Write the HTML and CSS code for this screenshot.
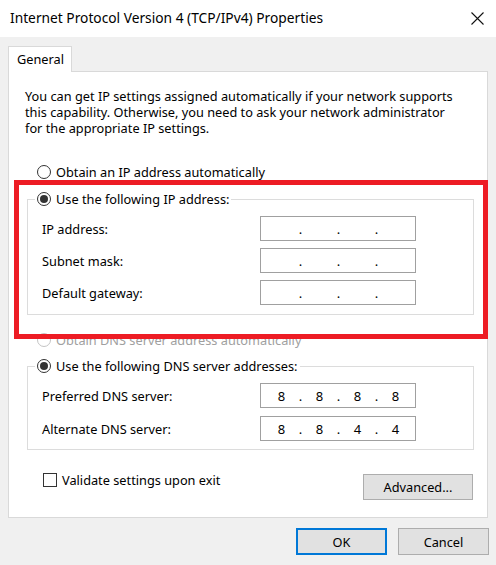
FILE: index.html
```html
<!DOCTYPE html>
<html lang="en">
<head>
<meta charset="utf-8">
<title>Internet Protocol Version 4 (TCP/IPv4) Properties</title>
<link rel="stylesheet" href="styles.css">
</head>
<body>
<div class="window">
  <div class="titlebar">
    <span class="title">Internet Protocol Version 4 (TCP/IPv4) Properties</span>
    <svg class="close" width="13" height="13" viewBox="0 0 13 13"><path d="M0.5 0.5L12.5 12.5M12.5 0.5L0.5 12.5" stroke="#111" stroke-width="1.1" fill="none"/></svg>
  </div>
  <div class="content">
    <div class="tab">General</div>
    <div class="panel">
      <p class="intro">You can get IP settings assigned automatically if your network supports<br>this capability. Otherwise, you need to ask your network administrator<br>for the appropriate IP settings.</p>

      <div class="radio-row"><span class="radio"></span><span>Obtain an IP address automatically</span></div>

      <fieldset class="group group-ip">
        <legend><span class="radio checked"></span><span>Use the following IP address:</span></legend>
        <div class="fields">
          <span class="label">IP address:</span>
          <div class="ipbox"><span class="seg"></span><span class="dot">.</span><span class="seg"></span><span class="dot">.</span><span class="seg"></span><span class="dot">.</span><span class="seg"></span></div>
          <span class="label">Subnet mask:</span>
          <div class="ipbox"><span class="seg"></span><span class="dot">.</span><span class="seg"></span><span class="dot">.</span><span class="seg"></span><span class="dot">.</span><span class="seg"></span></div>
          <span class="label">Default gateway:</span>
          <div class="ipbox"><span class="seg"></span><span class="dot">.</span><span class="seg"></span><span class="dot">.</span><span class="seg"></span><span class="dot">.</span><span class="seg"></span></div>
        </div>
      </fieldset>

      <div class="radio-row disabled"><span class="radio"></span><span>Obtain DNS server address automatically</span></div>

      <fieldset class="group group-dns">
        <legend><span class="radio checked"></span><span>Use the following DNS server addresses:</span></legend>
        <div class="fields dns-fields">
          <span class="label">Preferred DNS server:</span>
          <div class="ipbox"><span class="seg">8</span><span class="dot">.</span><span class="seg">8</span><span class="dot">.</span><span class="seg">8</span><span class="dot">.</span><span class="seg">8</span></div>
          <span class="label">Alternate DNS server:</span>
          <div class="ipbox"><span class="seg">8</span><span class="dot">.</span><span class="seg">8</span><span class="dot">.</span><span class="seg">4</span><span class="dot">.</span><span class="seg">4</span></div>
        </div>
      </fieldset>

      <div class="bottom-row">
        <div class="check-row"><span class="checkbox"></span><span>Validate settings upon exit</span></div>
        <button class="btn btn-adv">Advanced...</button>
      </div>

      <div class="highlight"></div>
    </div>
    <div class="actions">
      <button class="btn btn-ok">OK</button>
      <button class="btn btn-cancel">Cancel</button>
    </div>
  </div>
</div>
</body>
</html>
```

FILE: styles.css
```css
* { box-sizing: border-box; }
html, body { margin: 0; padding: 0; }
body {
  width: 496px;
  height: 565px;
  background: #f0f0f0;
  font-family: "Noto Sans", "Open Sans", sans-serif;
  font-size: 12.75px;
  color: #000;
  overflow: hidden;
}
.window { display: flex; flex-direction: column; }

.titlebar {
  height: 37px;
  background: #fff;
  display: flex;
  align-items: center;
  justify-content: space-between;
  padding: 0 12px 2px 10px;
}
.title { font-size: 13.75px; color: #000; }
.close { display: block; margin-top: 1px; }

.content { padding: 9px 8px 0 8px; display: flex; flex-direction: column; }

.tab {
  width: 64px;
  height: 26px;
  background: #fff;
  border: 1px solid #d9d9d9;
  border-bottom: none;
  padding: 3px 0 0 8px;
  line-height: 18px;
  margin-bottom: -1px;
  position: relative;
  z-index: 1;
}

.panel {
  position: relative;
  background: #fff;
  border: 1px solid #d9d9d9;
  padding: 0 0 17px 16px;
  display: flex;
  flex-direction: column;
}

.intro { margin: 16px 0 0 0; line-height: 16px; }

.radio-row {
  display: flex;
  align-items: center;
  height: 16px;
  margin: 28px 0 0 12px;
  gap: 5px;
}
.radio-row.disabled { color: #a0a0a0; margin-top: 17px; }
.radio-row.disabled .radio { border-color: #c4c4c4; }

.radio {
  width: 14px;
  height: 14px;
  border: 1px solid #333;
  border-radius: 50%;
  background: #fff;
  display: inline-flex;
  align-items: center;
  justify-content: center;
  flex: none;
}
.radio.checked::after {
  content: "";
  width: 8px;
  height: 8px;
  border-radius: 50%;
  background: #333;
}

.group {
  margin: 11px 13px 0 2px;
  padding: 0 0 9px 0;
  border: 1px solid #dcdcdc;
  min-width: 0;
}
.group-dns { margin-top: 10px; padding-bottom: 8px; }
.group legend {
  margin-left: 7px;
  padding: 0 2px;
  height: 16px;
  display: flex;
  align-items: center;
  gap: 5px;
}

.fields {
  display: grid;
  grid-template-columns: 218px 156px;
  row-gap: 7px;
  padding: 9px 0 0 14px;
  align-items: center;
}
.dns-fields { row-gap: 8px; }
.label { line-height: 16px; }

.ipbox {
  height: 25px;
  border: 1px solid #a0a0a0;
  background: #fff;
  display: flex;
  align-items: center;
  padding-left: 5px;
  font-size: 13px;
}
.seg { width: 31px; text-align: center; }
.dot { width: 7px; text-align: center; }

.bottom-row {
  display: flex;
  justify-content: space-between;
  align-items: flex-start;
  margin: 23px 14px 0 18px;
}
.check-row { display: flex; align-items: center; gap: 5px; height: 14px; }
.checkbox {
  width: 14px;
  height: 14px;
  border: 1px solid #333;
  background: #fff;
}

.btn {
  font-family: inherit;
  font-size: 12.75px;
  color: #000;
  background: #e1e1e1;
  border: 1px solid #adadad;
  border-radius: 0;
  padding: 0;
  margin: 0;
}
.btn-adv { width: 110px; height: 26px; margin-top: 1px; }

.actions {
  display: flex;
  justify-content: flex-end;
  gap: 11px;
  margin: 10px -1px 0 0;
}
.btn-ok, .btn-cancel { width: 91px; height: 27px; }
.btn-ok { border: 2px solid #0078d7; }

.highlight {
  position: absolute;
  left: 5px;
  top: 108px;
  width: 474px;
  height: 159px;
  border: 5px solid #ed1c24;
  pointer-events: none;
}
```
